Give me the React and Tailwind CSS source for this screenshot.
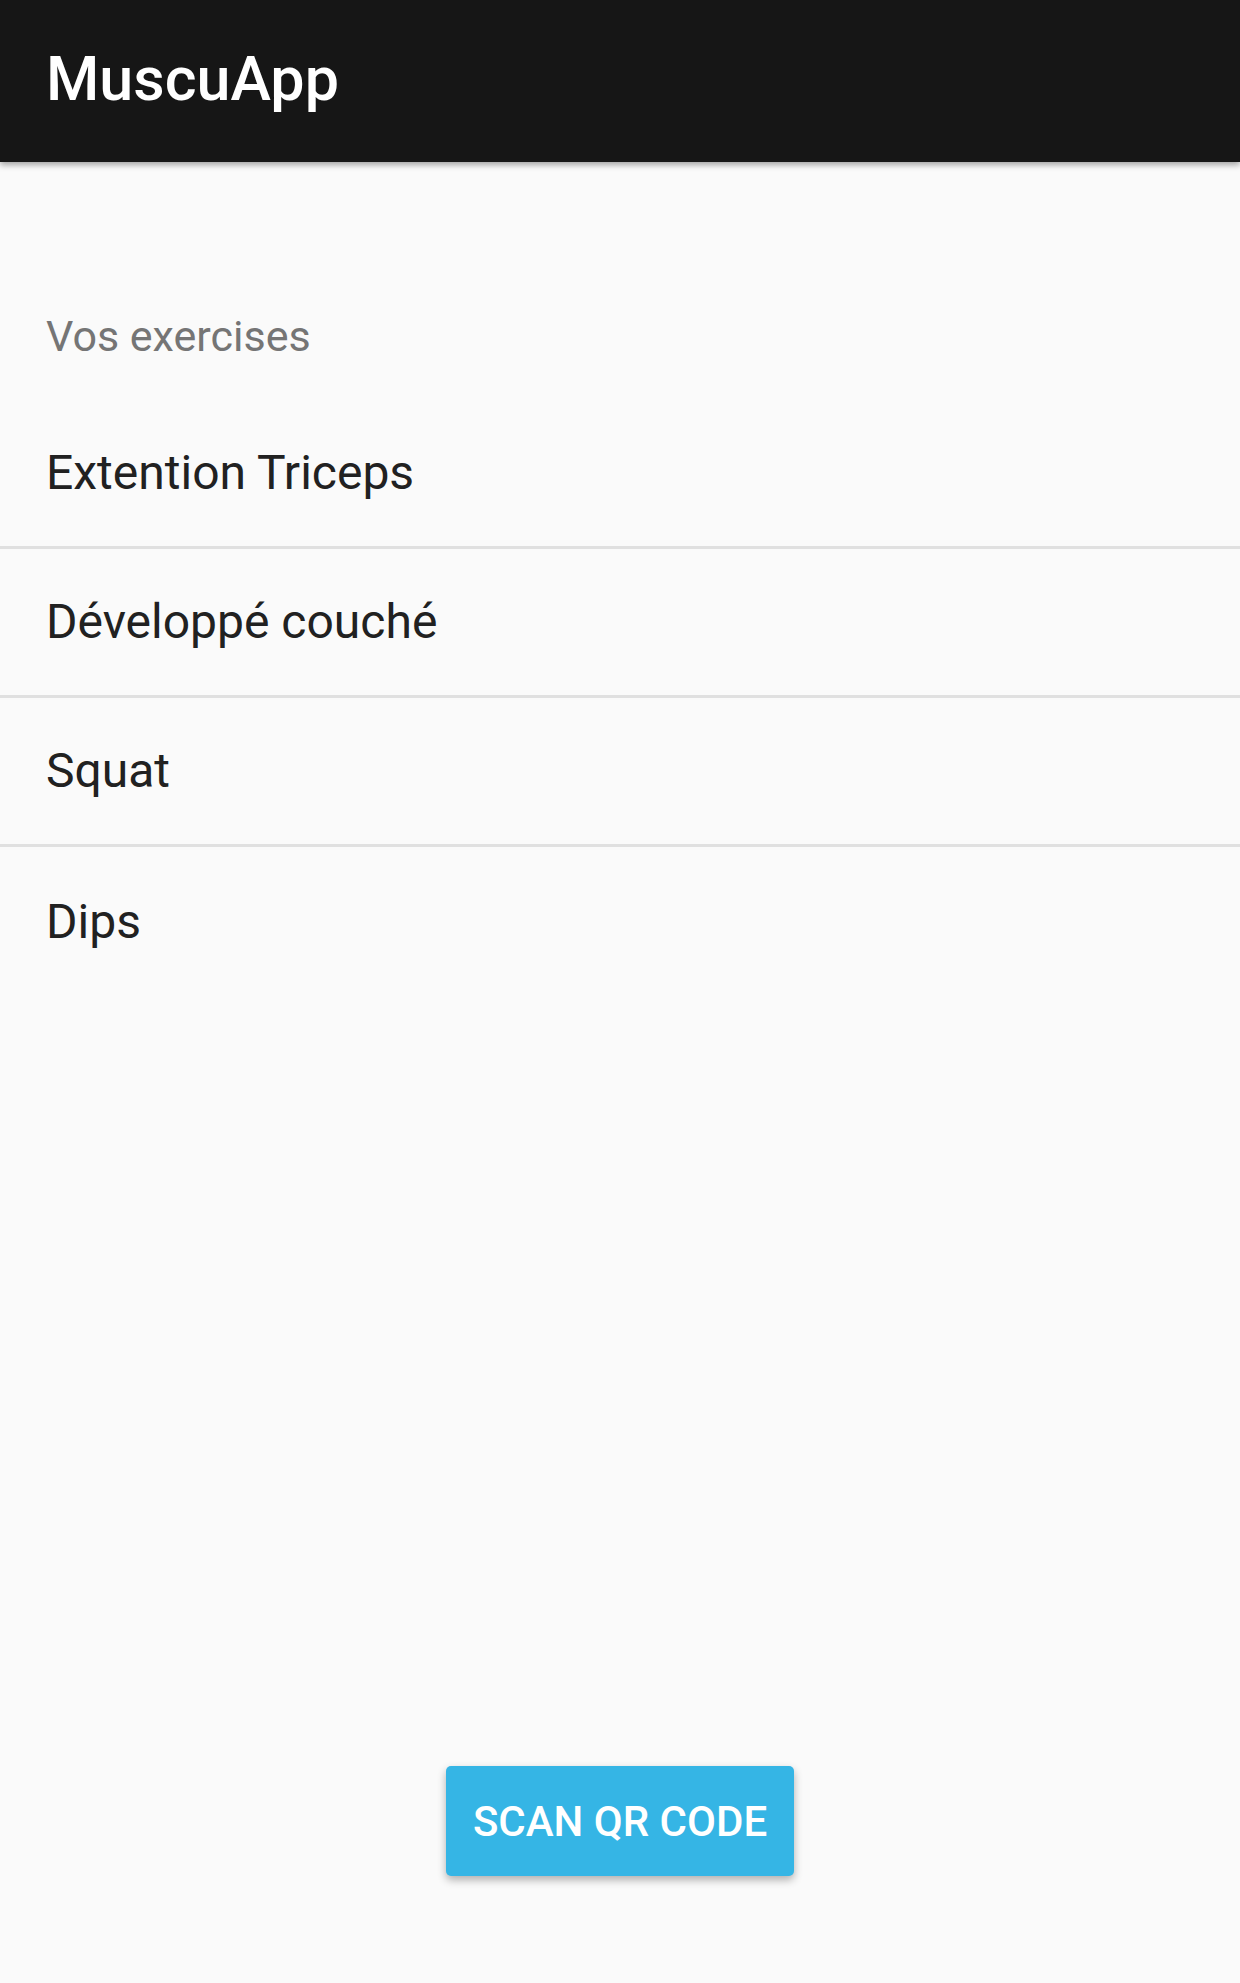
const exercises = ["Extention Triceps", "Développé couché", "Squat", "Dips"];

export default function App() {
  return (
    <div
      className="min-h-[1983px] flex flex-col bg-[#fafafa]"
      style={{ fontFamily: "Roboto, 'Liberation Sans', sans-serif" }}
    >
      {/* Toolbar */}
      <header className="h-[162px] bg-[#161616] flex items-center px-[46px] shadow-[0_3px_6px_rgba(0,0,0,0.35)] relative z-10">
        <h1 className="text-[61px] font-medium text-white leading-none -mt-[4px]">MuscuApp</h1>
      </header>

      {/* List */}
      <main className="flex-1 flex flex-col">
        <div className="pt-[144px] pb-[34px] px-[46px]">
          <p className="text-[43px] leading-[60px] text-[#757575]">Vos exercises</p>
        </div>
        <ul>
          {exercises.map((name, i) => (
            <li
              key={name}
              className={
                "h-[149px] flex items-center px-[46px] " +
                (i < exercises.length - 1 ? "border-b-[3px] border-[#e0e0e0]" : "")
              }
            >
              <span className="text-[48px] text-[#212121] leading-none">{name}</span>
            </li>
          ))}
        </ul>

        <div className="mt-auto mb-[107px] flex justify-center">
          <button className="w-[348px] h-[110px] rounded-[5px] bg-[#35b5e5] text-white text-[42px] font-medium shadow-[0_4px_8px_rgba(0,0,0,0.3)]">
            SCAN QR CODE
          </button>
        </div>
      </main>
    </div>
  );
}
